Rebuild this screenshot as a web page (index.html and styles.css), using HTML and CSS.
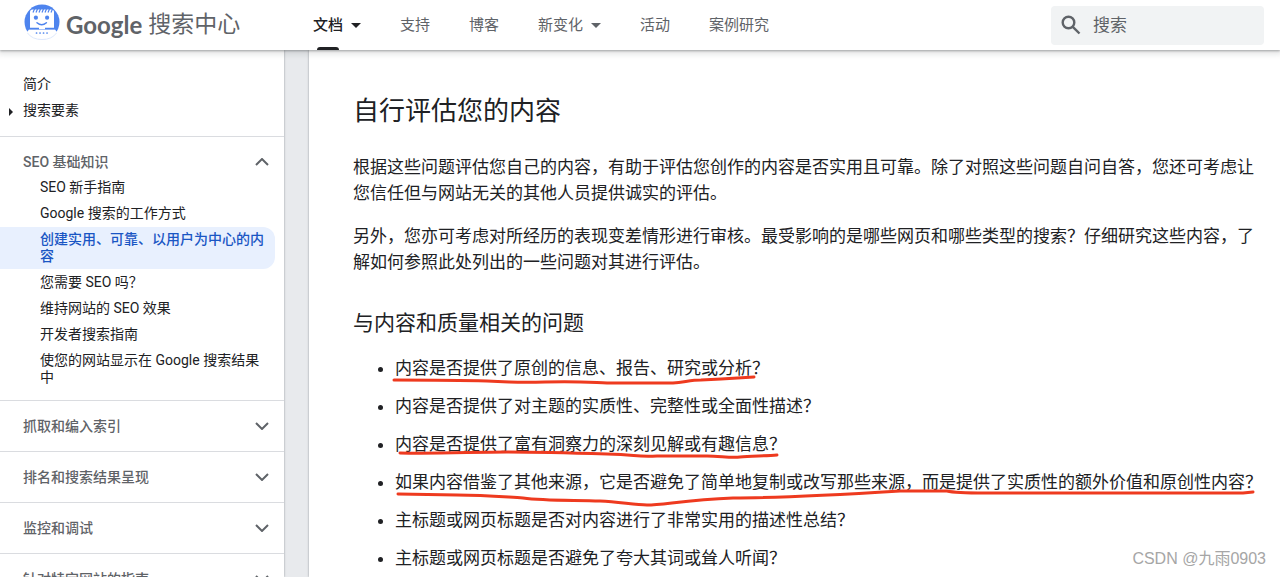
FILE: index.html
```html
<!DOCTYPE html>
<html lang="zh-CN">
<head>
    <meta charset="UTF-8">
    <meta name="viewport" content="width=device-width, initial-scale=1.0">
    <title>创建实用、可靠、以用户为中心的内容</title>
    <link rel="stylesheet" href="styles.css">
</head>
<body>
    <header class="top-bar">
        <a class="logo" href="#">
            <svg class="logo-icon" viewBox="0 0 36 36" aria-hidden="true">
                <circle cx="18" cy="18" r="17.5" fill="#4e84ee"/>
                <path d="M6 25v-17q0-2.500 2.500-2.500h19q2.500 0 2.500 2.500v17z" fill="#fff"/>
                <path d="M9 8.500l1.500-3.500M12 8.500l1.500-3.500M15 8.500l1.500-3.500M18 8.500l1.500-3.500M21 8.500l1.500-3.500M24 8.500l1.500-3.500M27 8.500l1.500-3.500" stroke="#4e84ee" stroke-width="1.200"/>
                <path d="M5 25.500h26l2 2.500q-4 8-15 8t-15-8z" fill="#fff"/>
                <path d="M3.500 29q4.500 6.500 14.500 6.500t14.500-6.500" fill="none" stroke="#dfe9fc"/>
                <path d="M5 24.500h10M21 24.500h10" stroke="#4e84ee" stroke-width="1.400"/>
                <circle cx="11.900" cy="13.700" r="2.100" fill="#4e84ee"/>
                <circle cx="23.100" cy="13.700" r="2.100" fill="#4e84ee"/>
                <path d="M13 18.800q4.700 4 9.400 0" fill="none" stroke="#4e84ee" stroke-width="1.500" stroke-linecap="round"/>
                <path d="M12.500 29h.1M16 29h.1M19.500 29h.1M23 29h.1" stroke="#4e84ee" stroke-width="1.700" stroke-linecap="round"/>
            </svg>
            <span class="brand">Google</span>
            <span class="product">搜索中心</span>
        </a>
        <nav class="tabs">
            <button class="tab active" type="button"><span class="tab-label">文档</span><svg class="caret" viewBox="0 0 10 5" aria-hidden="true"><path d="M0 0h10L5 5z"/></svg></button>
            <a class="tab" href="#">支持</a>
            <a class="tab" href="#">博客</a>
            <button class="tab" type="button"><span class="tab-label">新变化</span><svg class="caret" viewBox="0 0 10 5" aria-hidden="true"><path d="M0 0h10L5 5z"/></svg></button>
            <a class="tab" href="#">活动</a>
            <a class="tab" href="#">案例研究</a>
        </nav>
        <form class="search">
            <label for="q" aria-label="搜索">
                <svg class="search-icon" viewBox="0 0 20 20" aria-hidden="true">
                    <circle cx="7.500" cy="7.500" r="5.800"/>
                    <path d="M11.800 11.800L18.500 18.500"/>
                </svg>
            </label>
            <input id="q" type="text" placeholder="搜索">
        </form>
    </header>

    <div class="layout">
        <nav class="sidebar">
            <ul class="nav-list nav-top">
                <li><a href="#">简介</a></li>
                <li class="has-children"><a href="#">搜索要素</a></li>
            </ul>
            <details class="section" open>
                <summary>SEO 基础知识 <svg class="chevron" viewBox="0 0 14 8" aria-hidden="true"><path d="M1 1l6 6 6-6"/></svg></summary>
                <ul class="nav-list nested">
                    <li><a href="#">SEO 新手指南</a></li>
                    <li><a href="#">Google 搜索的工作方式</a></li>
                    <li class="current"><a href="#">创建实用、可靠、以用户为中心的内容</a></li>
                    <li><a href="#">您需要 SEO 吗？</a></li>
                    <li><a href="#">维持网站的 SEO 效果</a></li>
                    <li><a href="#">开发者搜索指南</a></li>
                    <li><a href="#">使您的网站显示在 Google 搜索结果中</a></li>
                </ul>
            </details>
            <details class="section">
                <summary>抓取和编入索引 <svg class="chevron" viewBox="0 0 14 8" aria-hidden="true"><path d="M1 1l6 6 6-6"/></svg></summary>
            </details>
            <details class="section">
                <summary>排名和搜索结果呈现 <svg class="chevron" viewBox="0 0 14 8" aria-hidden="true"><path d="M1 1l6 6 6-6"/></svg></summary>
            </details>
            <details class="section">
                <summary>监控和调试 <svg class="chevron" viewBox="0 0 14 8" aria-hidden="true"><path d="M1 1l6 6 6-6"/></svg></summary>
            </details>
            <details class="section">
                <summary>针对特定网站的指南 <svg class="chevron" viewBox="0 0 14 8" aria-hidden="true"><path d="M1 1l6 6 6-6"/></svg></summary>
            </details>
        </nav>

        <main class="article">
            <h2>自行评估您的内容</h2>
            <p>根据这些问题评估您自己的内容，有助于评估您创作的内容是否实用且可靠。除了对照这些问题自问自答，您还可考虑让您信任但与网站无关的其他人员提供诚实的评估。</p>
            <p>另外，您亦可考虑对所经历的表现变差情形进行审核。最受影响的是哪些网页和哪些类型的搜索？仔细研究这些内容，了解如何参照此处列出的一些问题对其进行评估。</p>
            <h3>与内容和质量相关的问题</h3>
            <ul class="questions">
                <li>内容是否提供了原创的信息、报告、研究或分析？
                    <svg class="marker" width="870" height="38" aria-hidden="true"><path d="M-1 25C30 25 60 25 92 26S120 28 150 27S190 27 212 28L278 28C290 27 296 25 306 25L326 24L359 22"/></svg>
                </li>
                <li>内容是否提供了对主题的实质性、完整性或全面性描述？</li>
                <li>内容是否提供了富有洞察力的深刻见解或有趣信息？
                    <svg class="marker" width="870" height="38" aria-hidden="true"><path d="M5 22C40 23 80 21 112 21S180 22 212 23S240 26 262 25L312 25C325 25 335 27 345 26S370 25 382 24"/></svg>
                </li>
                <li>如果内容借鉴了其他来源，它是否避免了简单地复制或改写那些来源，而是提供了实质性的额外价值和原创性内容？
                    <svg class="marker" width="870" height="38" aria-hidden="true"><path d="M3 25L62 26C90 26 110 28 128 29C150 32 180 31 205 32C225 33 240 36 252 36C268 36 290 31 338 29C370 29 440 26 505 22L552 22C560 24 575 24 590 24L848 24L858 23"/></svg>
                </li>
                <li>主标题或网页标题是否对内容进行了非常实用的描述性总结？</li>
                <li>主标题或网页标题是否避免了夸大其词或耸人听闻？</li>
            </ul>
        </main>
    </div>
    <div class="watermark">CSDN @九雨0903</div>
</body>
</html>
```
FILE: styles.css
```css
* {
    box-sizing: border-box;
}
body {
    margin: 0;
    height: 100vh;
    display: flex;
    flex-direction: column;
    overflow: hidden;
    font-family: Roboto, "Noto Sans CJK SC", sans-serif;
    color: #202124;
    background: #e8eaed;
}
a {
    color: inherit;
    text-decoration: none;
}
ul {
    margin: 0;
    padding: 0;
}

/* Header */
.top-bar {
    position: relative;
    z-index: 1;
    flex: none;
    display: flex;
    align-items: center;
    height: 50px;
    padding: 0 16px 0 24px;
    background: #fff;
    box-shadow: 0 1px 2px rgba(60, 64, 67, 0.4), 0 2px 6px 2px rgba(60, 64, 67, 0.15);
}
.logo {
    flex: 0 0 289px;
    display: flex;
    align-items: center;
    color: #5f6368;
    line-height: 36px;
}
.logo-icon {
    width: 36px;
    height: 36px;
    margin: 0 6px 6px 0;
}
.brand {
    font-family: Lato, sans-serif;
    font-size: 24px;
    font-weight: 700;
    margin-right: 6px;
}
.product {
    font-size: 23px;
    font-weight: 400;
}
.tabs {
    display: flex;
    align-self: stretch;
    gap: 39px;
}
.tab {
    display: flex;
    align-items: center;
    gap: 8px;
    padding: 0;
    border: 0;
    background: none;
    font-family: inherit;
    font-size: 15px;
    font-weight: 400;
    line-height: 50px;
    color: #5f6368;
    cursor: pointer;
}
.tab.active {
    font-weight: 500;
    color: #202124;
}
.tab-label {
    position: relative;
}
.tab.active .tab-label::after {
    content: "";
    position: absolute;
    left: 4px;
    right: 4px;
    bottom: 0;
    height: 3px;
    border-radius: 3px 3px 0 0;
    background: #202124;
}
.caret {
    width: 10px;
    height: 5px;
    fill: currentColor;
}
.search {
    display: flex;
    align-items: center;
    gap: 12px;
    width: 213px;
    height: 39px;
    margin-left: auto;
    padding: 0 10px;
    border-radius: 4px;
    background: #f1f3f4;
}
.search label {
    display: flex;
}
.search-icon {
    width: 20px;
    height: 20px;
    fill: none;
    stroke: #5f6368;
    stroke-width: 2.4;
}
.search input {
    flex: 1;
    min-width: 0;
    padding: 0;
    border: 0;
    outline: 0;
    background: none;
    font-family: inherit;
    font-size: 17px;
}
.search input::placeholder {
    color: #5f6368;
}

/* Columns */
.layout {
    flex: 1;
    min-height: 0;
    display: flex;
    gap: 25px;
}
.sidebar,
.article {
    overflow: hidden;
    background: #fff;
    box-shadow: 0 0 2px rgba(60, 64, 67, 0.5);
}

/* Sidebar */
.sidebar {
    flex: 0 0 284px;
    font-size: 14px;
    line-height: 17px;
}
.nav-list {
    display: flex;
    flex-direction: column;
    gap: 1px;
    list-style: none;
}
.nav-list a {
    display: block;
    padding: 4px 9px 4px 23px;
}
.nav-top {
    padding: 22px 0 13px;
}
.has-children a {
    position: relative;
}
.has-children a::before {
    content: "";
    position: absolute;
    left: 9px;
    top: 10px;
    border: 4px solid transparent;
    border-left-color: #202124;
    border-right-width: 0;
}
.section {
    padding: 12px 0;
    border-top: 1px solid #dadce0;
}
.section[open] {
    padding-bottom: 10px;
}
.section summary {
    display: flex;
    align-items: center;
    justify-content: space-between;
    height: 26px;
    padding: 0 15px 0 23px;
    font-weight: 500;
    color: #5f6368;
    list-style: none;
    cursor: pointer;
}
.chevron {
    width: 14px;
    height: 8px;
    fill: none;
    stroke: #5f6368;
    stroke-width: 2;
}
.section[open] .chevron {
    transform: rotate(180deg);
}
.nested {
    margin-right: 9px;
}
.nested a {
    padding-left: 40px;
}
.current {
    border-radius: 0 12px 12px 0;
    background: #e8f0fe;
    color: #1a56c4;
    font-weight: 500;
}

/* Article */
.article {
    flex: 1;
    padding: 44px 16px 0 44px;
    font-size: 17px;
    line-height: 26px;
}
.article h2 {
    margin: 0 0 26px;
    font-size: 26px;
    font-weight: 400;
    line-height: 34px;
}
.article p {
    margin: 0 0 17px;
}
.article h3 {
    margin: 34px 0 18px;
    font-size: 21px;
    font-weight: 400;
    line-height: 28px;
}
.questions {
    padding-left: 42px;
}
.questions li {
    position: relative;
    margin-bottom: 12px;
}

/* Hand-drawn red underline */
.marker {
    position: absolute;
    left: 0;
    top: 0;
    overflow: visible;
    pointer-events: none;
    fill: none;
    stroke: #ee3a1f;
    stroke-width: 3;
    stroke-linecap: round;
    stroke-linejoin: round;
}
.watermark {
    position: absolute;
    right: 14px;
    bottom: 6px;
    font-family: "Liberation Sans", "Noto Sans CJK SC", sans-serif;
    font-size: 16px;
    line-height: 24px;
    color: #a6a6a6;
}
```
